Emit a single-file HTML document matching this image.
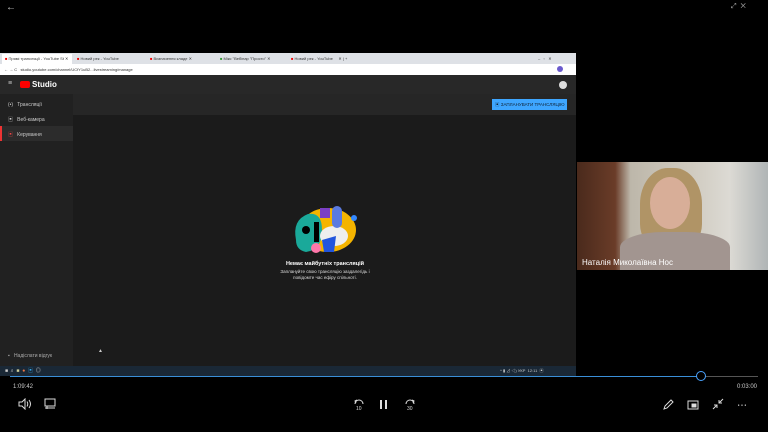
<!DOCTYPE html>
<html><head><meta charset="utf-8"><style>
*{margin:0;padding:0;box-sizing:border-box}
body{width:768px;height:432px;background:#000;position:relative;overflow:hidden;font-family:"Liberation Sans","Noto Sans CJK SC",sans-serif;color:#ddd}
.a{position:absolute}
.t{font-size:4px;color:#333}
</style></head><body>
<div class="a" style="left:6px;top:2px;font-size:10px;color:#ccc">←</div>
<div class="a" style="left:731px;top:3px;font-size:7px;color:#aaa">⤢ &nbsp;✕</div>
<div class="a" style="left:0;top:53px;width:576px;height:11px;background:#dee1e6"></div>
<div class="a" style="left:2px;top:54px;width:70px;height:10px;background:#fff"></div>
<div class="a t" style="left:5px;top:56px"><span style="color:#e00">■</span> Прямі трансляції - YouTube St ✕</div>
<div class="a t" style="left:77px;top:56px"><span style="color:#e00">■</span> Новий рек - YouTube</div>
<div class="a t" style="left:150px;top:56px"><span style="color:#e00">■</span> Визначення кладе ✕</div>
<div class="a t" style="left:220px;top:56px"><span style="color:#393">■</span> Мікс "Вебінар "Просто" ✕</div>
<div class="a t" style="left:291px;top:56px"><span style="color:#e00">■</span> Новий рек - YouTube &nbsp;&nbsp;&nbsp;&nbsp;✕ | +</div>
<div class="a t" style="left:538px;top:56px">–&nbsp;&nbsp; ▫ &nbsp;&nbsp;✕</div>
<div class="a" style="left:0;top:64px;width:576px;height:11px;background:#fff"></div>
<div class="a t" style="left:4px;top:67px">← → C &nbsp; studio.youtube.com/channel/UCfY1uB2...livestreaming/manage</div>
<div class="a" style="left:557px;top:66px;width:6px;height:6px;border-radius:50%;background:#6a5acd"></div>
<div class="a" style="left:0;top:75px;width:576px;height:19px;background:#282828"></div>
<div class="a" style="left:8px;top:80px;font-size:7px;color:#ccc">≡</div>
<div class="a" style="left:20px;top:81px;width:10px;height:7px;background:#f00;border-radius:2px"></div>
<div class="a" style="left:32px;top:80px;font-size:8px;color:#fff;font-weight:bold">Studio</div>
<div class="a" style="left:559px;top:81px;width:8px;height:8px;border-radius:50%;background:#ddd"></div>
<div class="a" style="left:0;top:94px;width:73px;height:272px;background:#212121"></div>
<div class="a" style="left:0;top:126px;width:73px;height:15px;background:#2c2c2c"></div>
<div class="a" style="left:0;top:126px;width:2px;height:15px;background:#e33"></div>
<div class="a" style="left:8px;top:102px;font-size:5px;color:#ccc">(•) &nbsp; Трансляції</div>
<div class="a" style="left:8px;top:116px;font-size:5px;color:#ccc">▣ &nbsp; Веб-камера</div>
<div class="a" style="left:8px;top:131px;font-size:5px;color:#ccc"><span style="color:#e44">▣</span> &nbsp; Керування</div>
<div class="a" style="left:8px;top:353px;font-size:5px;color:#aaa">▪ &nbsp; Надіслати відгук</div>
<div class="a" style="left:73px;top:94px;width:503px;height:272px;background:#1b1b1b"></div>
<div class="a" style="left:73px;top:94px;width:503px;height:21px;background:#262626"></div>
<div class="a" style="left:492px;top:99px;width:75px;height:11px;background:#3ea6ff;font-size:4.5px;color:#123;padding:3px 0 0 3px">▣ ЗАПЛАНУВАТИ ТРАНСЛЯЦІЮ</div>
<svg class="a" style="left:288px;top:200px" width="76" height="58" viewBox="0 0 76 58">
<ellipse cx="40" cy="30" rx="28" ry="22" fill="#f4b400"/>
<path d="M8 40 Q4 20 20 14 Q34 12 34 30 Q34 50 18 52 Q8 50 8 40Z" fill="#1aa99a"/>
<circle cx="18" cy="30" r="4" fill="#000"/>
<rect x="26" y="22" width="5" height="20" fill="#000"/>
<ellipse cx="46" cy="36" rx="14" ry="10" fill="#eee"/>
<rect x="44" y="6" width="10" height="22" rx="5" fill="#5a7ae0"/>
<rect x="32" y="8" width="10" height="10" fill="#7b3fc4"/>
<circle cx="66" cy="18" r="3" fill="#38f"/>
<path d="M34 40 L48 36 L46 52 L36 52Z" fill="#2255dd"/>
<circle cx="28" cy="48" r="5" fill="#f7a"/>
</svg>
<div class="a" style="left:230px;top:261px;width:190px;text-align:center;font-size:5.5px;color:#fff;font-weight:bold">Немає майбутніх трансляцій</div>
<div class="a" style="left:230px;top:269px;width:190px;text-align:center;font-size:4.5px;color:#ddd;line-height:6px">Заплануйте свою трансляцію заздалегідь і<br>повідомте час ефіру спільноті.</div>
<div class="a" style="left:98px;top:348px;font-size:5px;color:#ccc">▲</div>
<div class="a" style="left:0;top:366px;width:576px;height:10px;background:#1a2836"></div>
<div class="a" style="left:5px;top:367px;font-size:5px;color:#ccc">■ &nbsp;⌕ &nbsp;<span style="color:#cc9">■</span> &nbsp;<span style="color:#e74">●</span> &nbsp;<span style="color:#3ae">▣</span> &nbsp;◎</div>
<div class="a" style="left:500px;top:368px;font-size:4px;color:#ccc">^ ▮ ⊿ ◁) УКР &nbsp;12:11 &nbsp;▣</div>
<div class="a" style="left:10px;top:376px;width:691px;height:1px;background:#3a8fd8"></div>
<div class="a" style="left:701px;top:376px;width:57px;height:1px;background:#555"></div>
<div class="a" style="left:696px;top:371px;width:10px;height:10px;border-radius:50%;border:1.5px solid #4aa3ff;background:#000"></div>
<div class="a" style="left:13px;top:384px;font-size:6px;color:#ccc">1:09:42</div>
<div class="a" style="left:737px;top:384px;font-size:6px;color:#ccc">0:03:00</div>
<svg class="a" style="left:18px;top:398px" width="14" height="12" viewBox="0 0 14 12" fill="none" stroke="#ddd" stroke-width="1"><path d="M1 4h3l3-3v10l-3-3H1z"/><path d="M9 3.5q1.5 2.5 0 5M11 2q3 4 0 8"/></svg>
<svg class="a" style="left:44px;top:398px" width="12" height="12" viewBox="0 0 12 12" fill="none" stroke="#ddd" stroke-width="1"><rect x="1" y="1" width="10" height="7"/><path d="M1 10h10M3 8v3"/></svg>
<svg class="a" style="left:353px;top:397px" width="12" height="14" viewBox="0 0 12 14" fill="none" stroke="#ddd" stroke-width="1"><path d="M2 7a4 4 0 1 1 8 0"/><path d="M4 3L2 4l1 2"/><text x="3" y="13" font-size="5" fill="#ddd" stroke="none">10</text></svg>
<div class="a" style="left:380px;top:400px;width:1.5px;height:9px;background:#ddd"></div>
<div class="a" style="left:385px;top:400px;width:1.5px;height:9px;background:#ddd"></div>
<svg class="a" style="left:404px;top:397px" width="12" height="14" viewBox="0 0 12 14" fill="none" stroke="#ddd" stroke-width="1"><path d="M2 7a4 4 0 1 1 8 0"/><path d="M8 3l2 1-1 2"/><text x="3" y="13" font-size="5" fill="#ddd" stroke="none">30</text></svg>
<svg class="a" style="left:662px;top:398px" width="12" height="12" viewBox="0 0 12 12" fill="none" stroke="#ddd" stroke-width="1"><path d="M2 11l1-3 6-6 2 2-6 6z"/></svg>
<svg class="a" style="left:687px;top:400px" width="12" height="10" viewBox="0 0 12 10" fill="none" stroke="#ddd" stroke-width="1"><rect x="1" y="1" width="10" height="8"/><rect x="5" y="4" width="4" height="3" fill="#ddd"/></svg>
<svg class="a" style="left:712px;top:398px" width="12" height="12" viewBox="0 0 12 12" fill="none" stroke="#ddd" stroke-width="1"><path d="M11 1L7 5M7 2v3h3M1 11l4-4M5 10V7H2"/></svg>
<div class="a" style="left:737px;top:397px;font-size:10px;color:#ddd">⋯</div>
<div class="a" style="left:577px;top:162px;width:191px;height:108px;background:linear-gradient(90deg,#4a2a1c 0%,#6a3c28 20%,#bdb7aa 28%,#d0cbc0 60%,#dcdad4 80%,#b0b5b6 100%)"></div>
<div class="a" style="left:640px;top:168px;width:62px;height:80px;border-radius:45% 45% 30% 30%;background:#b09466"></div>
<div class="a" style="left:650px;top:177px;width:40px;height:52px;border-radius:50%;background:#d8ae98"></div>
<div class="a" style="left:620px;top:232px;width:110px;height:38px;border-radius:40% 40% 0 0;background:#a29590"></div>
<div class="a" style="left:582px;top:258px;font-size:8px;color:#fff">Наталія Миколаївна Нос</div>
</body></html>
